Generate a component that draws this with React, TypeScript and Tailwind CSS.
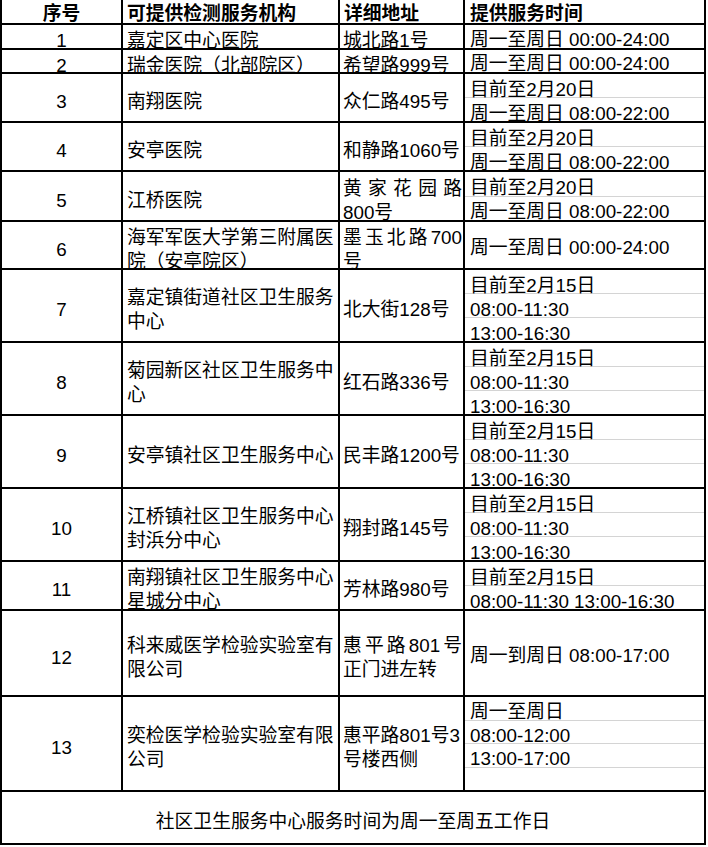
import React from "react";

type Row = {
  n: string;
  org: string;
  addr: string;
  justify?: boolean;
  times: string[];
  h: number;
};

const rows: Row[] = [
  { n: "1", org: "嘉定区中心医院", addr: "城北路1号", times: ["周一至周日 00:00-24:00"], h: 25 },
  { n: "2", org: "瑞金医院（北部院区）", addr: "希望路999号", times: ["周一至周日 00:00-24:00"], h: 24 },
  { n: "3", org: "南翔医院", addr: "众仁路495号", times: ["目前至2月20日", "周一至周日 08:00-22:00"], h: 49 },
  { n: "4", org: "安亭医院", addr: "和静路1060号", times: ["目前至2月20日", "周一至周日 08:00-22:00"], h: 49 },
  { n: "5", org: "江桥医院", addr: "黄家花园路800号", justify: true, times: ["目前至2月20日", "周一至周日 08:00-22:00"], h: 50 },
  { n: "6", org: "海军军医大学第三附属医院（安亭院区）", addr: "墨玉北路700号", justify: true, times: ["周一至周日 00:00-24:00"], h: 48 },
  { n: "7", org: "嘉定镇街道社区卫生服务中心", addr: "北大街128号", times: ["目前至2月15日", "08:00-11:30", "13:00-16:30"], h: 73 },
  { n: "8", org: "菊园新区社区卫生服务中心", addr: "红石路336号", times: ["目前至2月15日", "08:00-11:30", "13:00-16:30"], h: 73 },
  { n: "9", org: "安亭镇社区卫生服务中心", addr: "民丰路1200号", times: ["目前至2月15日", "08:00-11:30", "13:00-16:30"], h: 73 },
  { n: "10", org: "江桥镇社区卫生服务中心封浜分中心", addr: "翔封路145号", times: ["目前至2月15日", "08:00-11:30", "13:00-16:30"], h: 73 },
  { n: "11", org: "南翔镇社区卫生服务中心星城分中心", addr: "芳林路980号", times: ["目前至2月15日", "08:00-11:30 13:00-16:30"], h: 49 },
  { n: "12", org: "科来威医学检验实验室有限公司", addr: "惠平路801号正门进左转", justify: true, times: ["周一到周日 08:00-17:00"], h: 86 },
  { n: "13", org: "奕检医学检验实验室有限公司", addr: "惠平路801号3号楼西侧", times: ["周一至周日", "08:00-12:00", "13:00-17:00", ""], h: 95 },
];

export default function App() {
  return (
    <div className="w-[708px] h-[847px] bg-white text-black font-['Liberation_Sans','Noto_Sans_CJK_SC',sans-serif] text-[18.8px] leading-[24px]">
      <div className="w-[706px] border-l-2 border-black">
        {/* header */}
        <div className="flex h-[25px] border-b-2 border-black font-bold">
          <div className="w-[121px] border-r-2 border-black flex items-center justify-center pt-[4px]">序号</div>
          <div className="w-[217px] border-r-2 border-black flex items-center pl-[4px] pt-[4px]">可提供检测服务机构</div>
          <div className="w-[125px] border-r-2 border-black flex items-center pl-[4px] pt-[4px]">详细地址</div>
          <div className="w-[241px] border-r-2 border-black flex items-center pl-[5px] pt-[4px]">提供服务时间</div>
        </div>
        {rows.map((r) => {
          const single = r.times.length === 1;
          return (
            <div key={r.n} className="flex border-b-2 border-black" style={{ height: r.h }}>
              <div className="w-[121px] border-r-2 border-black flex items-center justify-center pt-[9px]">{r.n}</div>
              <div className="w-[217px] border-r-2 border-black flex items-center pl-[4px] pr-[2px] pt-[9px]">
                <div>{r.org}</div>
              </div>
              <div className="w-[125px] border-r-2 border-black flex items-center pl-[3px] pr-[1px] pt-[9px]">
                <div className={r.justify ? "w-full text-justify" : "w-full"}>{r.addr}</div>
              </div>
              <div className="w-[241px] border-r-2 border-black flex flex-col">
                {r.times.map((t, i) => (
                  <div
                    key={i}
                    className={
                      "flex-1 basis-0 min-h-0 flex items-center pl-[5px] leading-[14px] whitespace-nowrap " +
                      (single ? "pt-[6px] " : "pt-[8px] ") +
                      (i < r.times.length - 1 ? "border-b border-[#d4d4d4]" : "")
                    }
                  >
                    {t}
                  </div>
                ))}
              </div>
            </div>
          );
        })}
        {/* footer */}
        <div className="h-[53px] border-b-2 border-r-2 border-black flex items-center justify-center pt-[8px]">
          社区卫生服务中心服务时间为周一至周五工作日
        </div>
      </div>
    </div>
  );
}
